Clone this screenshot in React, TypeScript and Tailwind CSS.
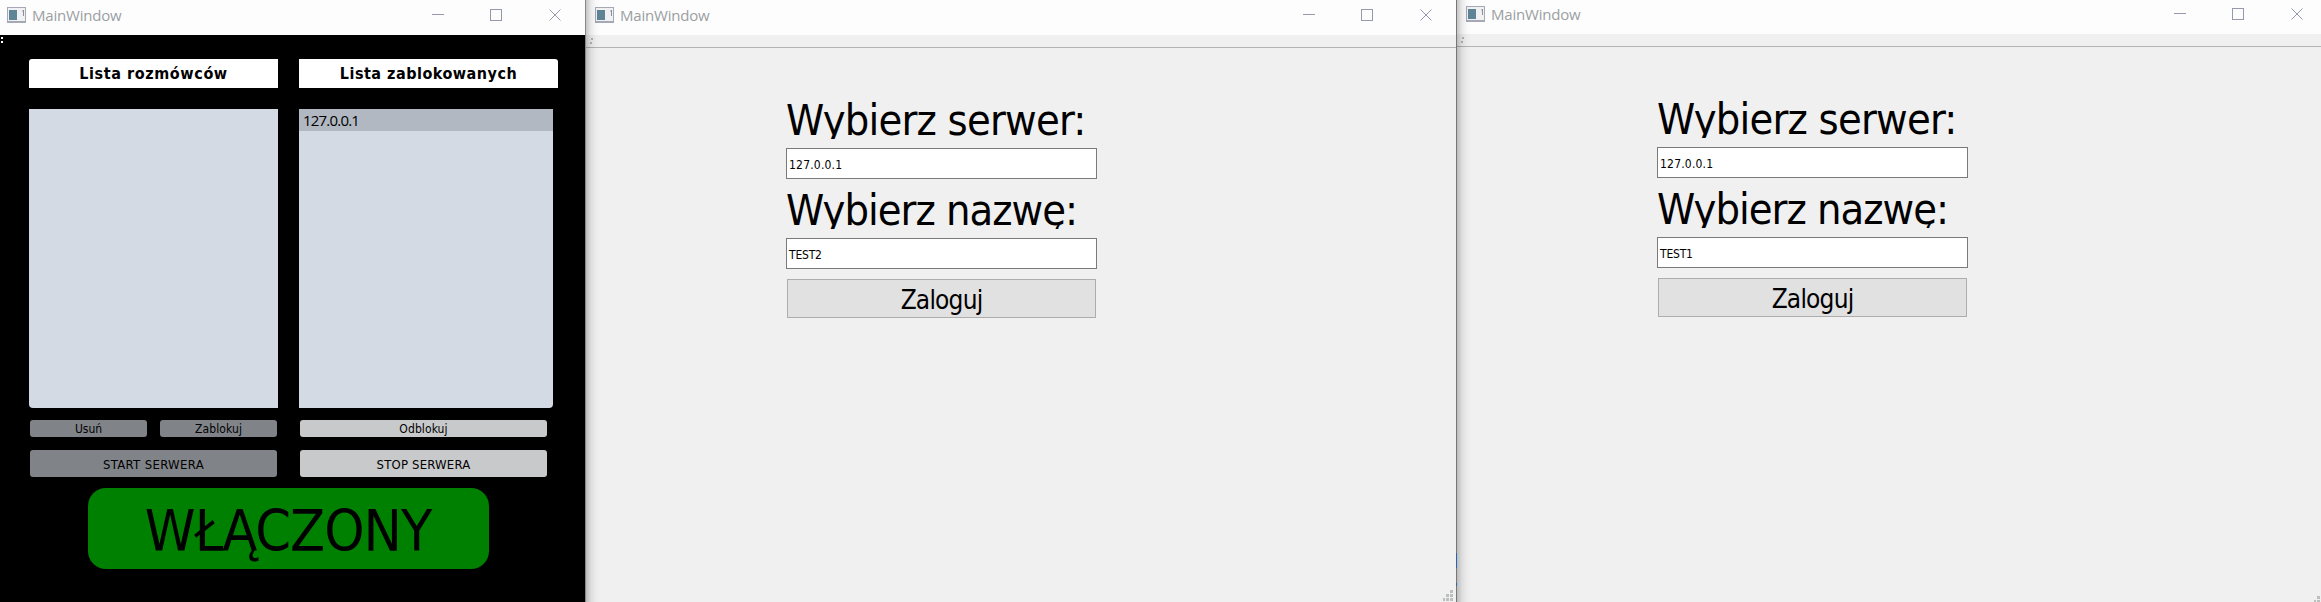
import React from "react";

function AppIcon() {
  return (
    <svg width="19" height="16" viewBox="0 0 19 16" shapeRendering="crispEdges" className="shrink-0">
      <rect width="19" height="16" fill="#a4a9b5" />
      <rect x="1" y="1" width="17" height="13" fill="#f1f1f4" />
      <rect x="2" y="3" width="8" height="10" fill="#5e8496" />
      <rect x="16" y="3" width="1" height="6" fill="#8b8f9c" />
      <rect x="15" y="3" width="1" height="2" fill="#c6c8d0" />
    </svg>
  );
}

function Controls() {
  return (
    <svg width="130" height="13" viewBox="0 0 130 13" fill="none" stroke="#9698ad" className="mt-[9px] shrink-0">
      <path d="M0 5.5h12M58.5 .5h11v11h-11z" shapeRendering="crispEdges" />
      <path d="M117.5 .5l11 11M128.5 .5l-11 11" />
    </svg>
  );
}

function TitleBar({ className }: { className: string }) {
  return (
    <div className={"flex shrink-0 items-start bg-[#fdfdfd] " + className}>
      <div className="mt-[7px]">
        <AppIcon />
      </div>
      <span className="ml-[6px] mt-[5px] text-[15px] leading-[20px] tracking-[-0.2px] text-[#9b9fa3] font-['Open_Sans',sans-serif] [font-stretch:normal]">
        MainWindow
      </span>
      <div className="flex-1" />
      <Controls />
    </div>
  );
}

function Grip() {
  return (
    <svg width="10" height="11" viewBox="0 0 10 11" fill="#bdbebf" shapeRendering="crispEdges">
      <path d="M7 0h3v3h-3zM3 4h3v3h-3zM7 4h3v3h-3zM0 8h2v3h-2zM3 8h3v3h-3zM7 8h3v3h-3z" />
    </svg>
  );
}

function EdgeShadow() {
  return (
    <div className="pointer-events-none absolute inset-y-0 left-0 w-[15px] bg-[linear-gradient(to_right,#00000038,#00000014_5px,#00000005_10px,transparent)]" />
  );
}

function Field({
  label,
  value,
  labelSpacing,
  valueSpacing,
}: {
  label: string;
  value: string;
  labelSpacing: string;
  valueSpacing: string;
}) {
  return (
    <div className="h-[90px] w-[311px]">
      <div className={"h-[50px] overflow-hidden whitespace-nowrap text-[43px] leading-[62px] " + labelSpacing}>
        {label}
      </div>
      <div
        className={
          "mt-[9px] flex h-[31px] items-center border border-[#7a7a7a] bg-white pl-[2px] pt-[2px] text-[12px] " + valueSpacing
        }
      >
        {value}
      </div>
    </div>
  );
}

function Login({ name, bar, body }: { name: string; bar: string; body: string }) {
  return (
    <>
      <TitleBar className={bar} />
      <div className="flex h-[13px] shrink-0 items-start border-b border-[#b4b4b6] pl-[4px] pt-[3px]">
        <svg width="3" height="6" fill="#b5b5b5" shapeRendering="crispEdges">
          <path d="M1 0h2v2h-2zM0 4h2v2h-2z" />
        </svg>
      </div>
      <div className={"flex flex-1 flex-col " + body}>
        <Field label="Wybierz serwer:" value="127.0.0.1" labelSpacing="tracking-[-0.8px]" valueSpacing="tracking-[0.2px]" />
        <Field label="Wybierz nazwę:" value={name} labelSpacing="tracking-[-1px]" valueSpacing="tracking-[-0.2px]" />
        <button className="ml-px mt-[10px] flex h-[39px] w-[309px] items-center justify-center border border-[#adadad] bg-[#e1e1e1] pt-[2px] text-[26px] leading-none tracking-[-0.8px]">
          Zaloguj
        </button>
      </div>
    </>
  );
}

export default function App() {
  return (
    <div className="flex h-[602px] w-[2321px] overflow-hidden bg-[#f0f0f0] text-black font-['DejaVu_Sans_Condensed','DejaVu_Sans',sans-serif] [font-stretch:condensed]">
      <section className="flex w-[585px] shrink-0 flex-col bg-black">
        <TitleBar className="h-[35px] pl-[7px] pr-[23px]" />
        <div className="flex h-[24px] shrink-0 pl-px pt-[2px]">
          <svg width="3" height="7" fill="#fff" shapeRendering="crispEdges">
            <path d="M0 0h2v2h-2zM0 4h2v2h-2z" />
          </svg>
        </div>
        <div className="flex pl-[29px]">
          <div className="w-[249px]">
            <div className="flex h-[29px] items-center justify-center rounded-tl-[3px] bg-white pt-px text-[16px] font-bold tracking-[0.6px]">
              Lista rozmówców
            </div>
            <div className="mt-[21px] h-[299px] rounded-bl-[4px] bg-[#d3dae4]" />
            <div className="mt-[12px] flex gap-[13px] pl-px text-[12px]">
              <button className="h-[17px] w-[117px] rounded-[3px] bg-[#808489] leading-[19px]">Usuń</button>
              <button className="h-[17px] w-[117px] rounded-[3px] bg-[#808489] leading-[19px] tracking-[0.1px]">
                Zablokuj
              </button>
            </div>
            <button className="ml-px mt-[13px] block h-[27px] w-[247px] rounded-[3px] bg-[#808489] pt-[2px] text-[13px] tracking-[0.35px]">
              START SERWERA
            </button>
          </div>
          <div className="ml-[21px] w-[259px]">
            <div className="flex h-[29px] items-center justify-center rounded-tr-[3px] bg-white pt-px text-[16px] font-bold tracking-[0.5px]">
              Lista zablokowanych
            </div>
            <div className="mt-[21px] h-[299px] w-[254px] overflow-hidden rounded-br-[4px] bg-[#d3dae4]">
              <div className="h-[22px] bg-[#b1b8c1] pl-[4px] text-[15px] leading-[22px] tracking-[-0.8px] font-['Open_Sans',sans-serif] [font-stretch:normal]">
                127.0.0.1
              </div>
            </div>
            <button className="ml-px mt-[12px] block h-[17px] w-[247px] rounded-[3px] bg-[#c8c9cb] text-[12px] leading-[19px] tracking-[0.1px]">
              Odblokuj
            </button>
            <button className="ml-px mt-[13px] block h-[27px] w-[247px] rounded-[3px] bg-[#c8c9cb] pt-[2px] text-[13px] tracking-[0.2px]">
              STOP SERWERA
            </button>
          </div>
        </div>
        <div className="ml-[88px] mt-[11px] flex h-[81px] w-[401px] items-center justify-center rounded-[18px] bg-[#008000] pr-[1px] pt-[5px] text-[57px] leading-none tracking-[-1px]">
          WŁĄCZONY
        </div>
      </section>

      <section className="relative flex w-[871px] shrink-0 flex-col border-l border-[#888]">
        <Login name="TEST2" bar="h-[35px] pl-[9px] pr-[23px]" body="pl-[200px] pt-[41px]" />
        <div className="flex justify-end pb-px pr-[3px]">
          <Grip />
        </div>
        <EdgeShadow />
      </section>

      <section className="relative flex w-[865px] shrink-0 flex-col border-l border-[#777]">
        <Login name="TEST1" bar="-mt-px h-[35px] pl-[9px] pr-[17px]" body="pl-[200px] pt-[41px]" />
        <svg width="7" height="6" fill="#bdbebf" shapeRendering="crispEdges" className="self-end">
          <path d="M3 0h3v3h-3zM0 4h2v2h-2zM3 4h3v2h-3z" />
        </svg>
        <EdgeShadow />
        <div className="absolute -left-px top-[553px] h-[15px] w-px bg-[#2a64b0]" />
        <div className="absolute -left-px top-[583px] h-[3px] w-px bg-[#2a64b0]" />
      </section>
    </div>
  );
}
